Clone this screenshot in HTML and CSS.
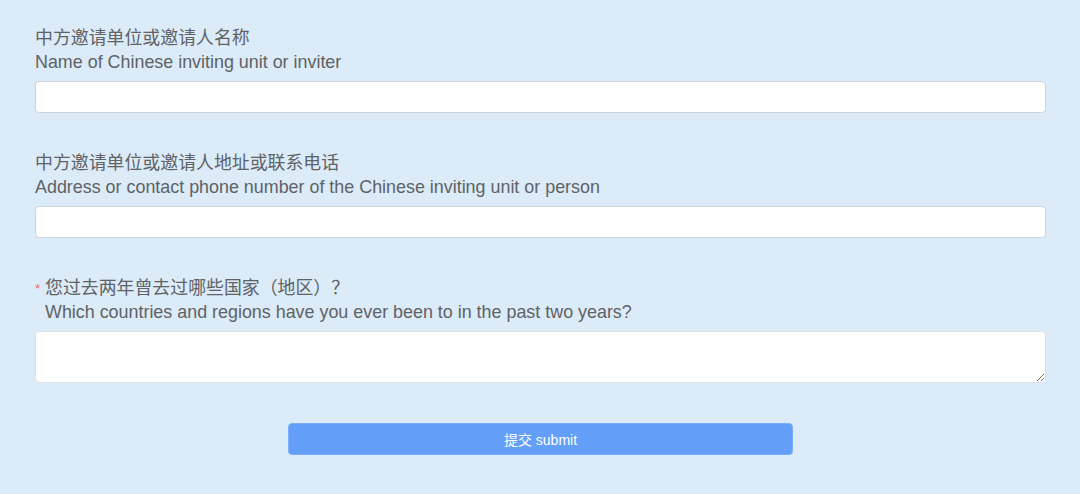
FILE: index.html
```html
<!DOCTYPE html>
<html lang="zh-CN">
<head>
    <meta charset="UTF-8">
    <meta name="viewport" content="width=device-width, initial-scale=1.0">
    <title>Visa Form</title>
    <link rel="stylesheet" href="styles.css">
</head>
<body>
    <form class="visa-form">
        <div class="field">
            <label class="field-label" for="inviter">
                <span class="zh">中方邀请单位或邀请人名称</span>
                <span class="en">Name of Chinese inviting unit or inviter</span>
            </label>
            <input type="text" id="inviter" name="inviter">
        </div>

        <div class="field">
            <label class="field-label" for="inviterContact">
                <span class="zh">中方邀请单位或邀请人地址或联系电话</span>
                <span class="en">Address or contact phone number of the Chinese inviting unit or person</span>
            </label>
            <input type="text" id="inviterContact" name="inviterContact">
        </div>

        <div class="field field-last">
            <label class="field-label required" for="countries">
                <span class="zh">您过去两年曾去过哪些国家（地区）？</span>
                <span class="en">Which countries and regions have you ever been to in the past two years?</span>
            </label>
            <textarea id="countries" name="countries" rows="2"></textarea>
        </div>

        <div class="actions">
            <button type="submit">提交 submit</button>
        </div>
    </form>
</body>
</html>
```
FILE: styles.css
```css
body {
    margin: 0;
    padding: 26px 34px 0 35px;
    background-color: #dbebf8;
    font-family: "Liberation Sans", Arial, "Noto Sans CJK SC", sans-serif;
    color: #606266;
}

.visa-form {
    display: flex;
    flex-direction: column;
}

.field {
    display: flex;
    flex-direction: column;
    margin-bottom: 38px;
}

.field-last {
    margin-bottom: 40px;
}

.field-label {
    display: flex;
    flex-direction: column;
    font-size: 17.9px;
    line-height: 24px;
    margin-bottom: 7px;
}

.field-label.required {
    position: relative;
    padding-left: 10px;
}

.field-label.required::before {
    content: "*";
    position: absolute;
    left: 0;
    top: 1px;
    color: #f56c6c;
    font-size: 13px;
}

input, textarea {
    box-sizing: border-box;
    width: 100%;
    margin: 0;
    border: 1px solid #ccd3dc;
    border-radius: 4px;
    background-color: #fff;
    font-family: inherit;
    font-size: 14px;
    padding: 0 10px;
}

input {
    height: 32px;
}

textarea {
    display: block;
    height: 52px;
    padding-top: 5px;
    border-color: #dde2e8;
    resize: vertical;
}

.actions {
    display: flex;
    justify-content: center;
}

button {
    width: 50%;
    height: 32px;
    border: 1px solid #7aaef8;
    border-radius: 4px;
    background-color: #639ef8;
    color: #fff;
    font-family: inherit;
    font-size: 14px;
    cursor: pointer;
}
```
